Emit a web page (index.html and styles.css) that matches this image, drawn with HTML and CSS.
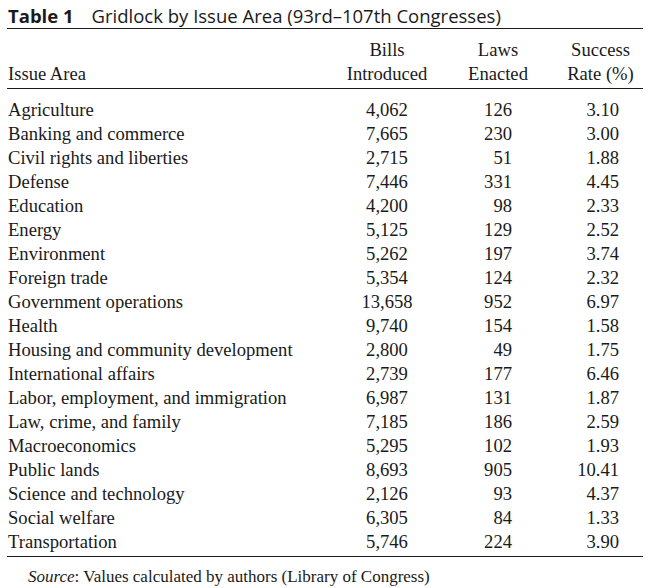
FILE: index.html
```html
<!DOCTYPE html>
<html>
<head>
<meta charset="utf-8">
<link rel="stylesheet" href="styles.css">
</head>
<body>
<div class="wrap">
  <div class="title"><span class="label">Table 1</span><span class="caption">Gridlock by Issue Area (93rd–107th Congresses)</span></div>
  <table class="data">
    <colgroup>
      <col class="c1"><col class="c2"><col class="c3"><col class="c4">
    </colgroup>
    <thead>
      <tr class="h1"><th></th><th>Bills</th><th>Laws</th><th class="last">Success</th></tr>
      <tr class="h2"><th class="left">Issue Area</th><th>Introduced</th><th>Enacted</th><th class="last">Rate (%)</th></tr>
    </thead>
    <tbody>
      <tr><td>Agriculture</td><td>4,062</td><td>126</td><td>3.10</td></tr>
      <tr><td>Banking and commerce</td><td>7,665</td><td>230</td><td>3.00</td></tr>
      <tr><td>Civil rights and liberties</td><td>2,715</td><td>51</td><td>1.88</td></tr>
      <tr><td>Defense</td><td>7,446</td><td>331</td><td>4.45</td></tr>
      <tr><td>Education</td><td>4,200</td><td>98</td><td>2.33</td></tr>
      <tr><td>Energy</td><td>5,125</td><td>129</td><td>2.52</td></tr>
      <tr><td>Environment</td><td>5,262</td><td>197</td><td>3.74</td></tr>
      <tr><td>Foreign trade</td><td>5,354</td><td>124</td><td>2.32</td></tr>
      <tr><td>Government operations</td><td>13,658</td><td>952</td><td>6.97</td></tr>
      <tr><td>Health</td><td>9,740</td><td>154</td><td>1.58</td></tr>
      <tr><td>Housing and community development</td><td>2,800</td><td>49</td><td>1.75</td></tr>
      <tr><td>International affairs</td><td>2,739</td><td>177</td><td>6.46</td></tr>
      <tr><td>Labor, employment, and immigration</td><td>6,987</td><td>131</td><td>1.87</td></tr>
      <tr><td>Law, crime, and family</td><td>7,185</td><td>186</td><td>2.59</td></tr>
      <tr><td>Macroeconomics</td><td>5,295</td><td>102</td><td>1.93</td></tr>
      <tr><td>Public lands</td><td>8,693</td><td>905</td><td>10.41</td></tr>
      <tr><td>Science and technology</td><td>2,126</td><td>93</td><td>4.37</td></tr>
      <tr><td>Social welfare</td><td>6,305</td><td>84</td><td>1.33</td></tr>
      <tr><td>Transportation</td><td>5,746</td><td>224</td><td>3.90</td></tr>
    </tbody>
  </table>
  <p class="source"><em>Source</em>: Values calculated by authors (Library of Congress)</p>
</div>
</body>
</html>
```
FILE: styles.css
```css
html, body {
  margin: 0;
  padding: 0;
  background: #ffffff;
}
.wrap {
  padding: 3px 16px 0 7px;
  color: #1a1a1a;
}
.title {
  font-family: "Open Sans", "Noto Sans", sans-serif;
  font-size: 18.5px;
  line-height: 25px;
  height: 25px;
  padding-left: 1px;
  border-bottom: 1px solid #1a1a1a;
  padding-bottom: 0;
  white-space: nowrap;
}
.label {
  font-weight: 700;
  margin-right: 18px;
}
.data {
  width: 636px;
  border-collapse: collapse;
  table-layout: fixed;
  font-family: "Liberation Serif", "Times New Roman", serif;
  font-size: 18.6px;
  line-height: 24px;
}
.c1 { width: 325px; }
.c2 { width: 110px; }
.c3 { width: 112px; }
.c4 { width: 89px; }
.data th {
  font-weight: 400;
  text-align: center;
  padding: 0;
  white-space: nowrap;
}
.data th.last { padding-left: 4px; }
.data th.left {
  text-align: left;
  padding-left: 1px;
}
.h1 th { padding-top: 9px; }
.h2 th {
  padding-bottom: 2px;
  border-bottom: 1px solid #1a1a1a;
}
.data td {
  padding: 0;
  white-space: nowrap;
}
.data td:nth-child(1) { text-align: left; padding-left: 1px; }
.data td:nth-child(2) { text-align: center; }
.data td:nth-child(3) { text-align: right; padding-right: 42px; }
.data td:nth-child(4) { text-align: right; padding-right: 24px; }
.data tbody tr:first-child td { padding-top: 9px; }
.data tbody tr:last-child td {
  padding-bottom: 2px;
  border-bottom: 1px solid #1a1a1a;
}
.source {
  margin: 10px 0 0 21px;
  font-family: "Liberation Serif", "Times New Roman", serif;
  font-size: 17px;
  line-height: 20px;
}
```
